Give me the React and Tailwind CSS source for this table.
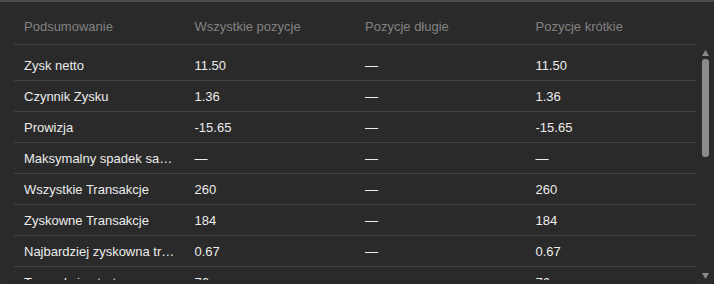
import React from "react";

const rows = [
  ["Zysk netto", "11.50", "—", "11.50"],
  ["Czynnik Zysku", "1.36", "—", "1.36"],
  ["Prowizja", "-15.65", "—", "-15.65"],
  ["Maksymalny spadek salda", "—", "—", "—"],
  ["Wszystkie Transakcje", "260", "—", "260"],
  ["Zyskowne Transakcje", "184", "—", "184"],
  ["Najbardziej zyskowna transakcja", "0.67", "—", "0.67"],
  ["Transakcje stratne", "76", "—", "76"],
];

const headers = ["Podsumowanie", "Wszystkie pozycje", "Pozycje długie", "Pozycje krótkie"];

export default function App() {
  return (
    <div
      className="w-[714px] h-[284px] bg-[#2a2a2a] border-t-2 border-[#4c4c4c] flex flex-col overflow-hidden text-[13px] leading-[15px]"
      style={{ fontFamily: '"Liberation Sans", Arial, sans-serif' }}
    >
      <div className="ml-[14px] w-[683px] h-[43px] border-b border-[#444444] flex pt-[17px] text-[#828282]">
        {headers.map((h) => (
          <div key={h} className="w-[170.5px] px-[10px] whitespace-nowrap">
            {h}
          </div>
        ))}
      </div>
      <div className="flex h-[235px]">
        <div className="ml-[14px] w-[682px] pt-[5px] overflow-hidden">
          {rows.map((r) => (
            <div key={r[0]} className="h-[31px] border-b border-[#414141] flex items-center text-[#ececec]">
              {r.map((c, i) => (
                <div key={i} className="w-[170.5px] px-[10px] truncate">
                  {c}
                </div>
              ))}
            </div>
          ))}
        </div>
        <div className="ml-[6px] w-[7px] flex flex-col items-center pt-[5px]">
          <svg width="7" height="6" viewBox="0 0 7 6" className="block">
            <polygon points="3.5,0 7,6 0,6" fill="#8a8a8a" />
          </svg>
          <div className="mt-[3px] w-[7px] h-[98px] rounded-[3px] bg-[#8b8b8b]" />
          <div className="flex-1" />
        </div>
      </div>
      <div className="flex h-[4px]">
        <div className="ml-[14px] w-[682px] bg-[#262626]" />
        <div className="ml-[6px] w-[7px] relative">
          <svg width="7" height="6" viewBox="0 0 7 6" className="absolute left-0 top-[-7px]">
            <polygon points="0,0 7,0 3.5,6" fill="#8a8a8a" />
          </svg>
        </div>
      </div>
    </div>
  );
}
